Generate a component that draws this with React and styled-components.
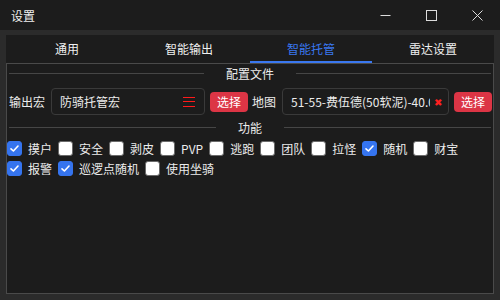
import React, { useState } from 'react';
import styled, { createGlobalStyle } from 'styled-components';

const GlobalStyle = createGlobalStyle`
  html, body {
    margin: 0;
    padding: 0;
    background: #2b2b2b;
  }
  * {
    box-sizing: border-box;
  }
`;

const Window = styled.div`
  width: 500px;
  height: 300px;
  display: flex;
  flex-direction: column;
  background: #2b2b2b;
  color: #ececec;
  font-family: "Noto Sans CJK SC", "Noto Sans", sans-serif;
  font-size: 12px;
  overflow: hidden;
`;

const TitleBar = styled.div`
  height: 30px;
  flex-shrink: 0;
  display: flex;
  align-items: center;
  background: #1c1c1c;
  padding-left: 11px;
`;

const Title = styled.div`
  flex: 1;
  font-size: 12px;
  color: #f0f0f0;
`;

const WinButton = styled.div`
  width: 46px;
  height: 30px;
  display: flex;
  align-items: center;
  justify-content: center;
`;

const Frame = styled.div`
  flex: 1;
  display: flex;
  flex-direction: column;
  padding: 5px 6px 6px;
`;

const TabBar = styled.div`
  height: 28px;
  display: grid;
  grid-template-columns: repeat(4, 1fr);
  background: #1c1c1c;
`;

const Tab = styled.div`
  display: flex;
  align-items: center;
  justify-content: center;
  padding-top: 1px;
  color: ${p => (p.$active ? '#3a78f0' : '#f0f0f0')};
  border-bottom: 2px solid ${p => (p.$active ? '#3a78f0' : 'transparent')};
`;

const Panel = styled.div`
  flex: 1;
  background: #1c1c1c;
  border: 1px solid #4a4a4a;
  display: flex;
  flex-direction: column;
`;

const GroupHeader = styled.div`
  height: 18px;
  margin: ${p => p.$top || 0}px 2px 0;
  display: flex;
  align-items: center;
  gap: 22px;

  &::before, &::after {
    content: '';
    flex: 1;
    height: 1px;
    background: #464646;
  }
`;

const FileRow = styled.div`
  margin: 6px 2px 0;
  height: 27px;
  display: flex;
  align-items: center;
`;

const Label = styled.span`
  margin-right: 6px;
  white-space: nowrap;
`;

const Field = styled.div`
  position: relative;
  flex-shrink: 0;
  width: ${p => p.$width}px;
  height: 27px;
  border: 1px solid #3a3a3a;
  border-radius: 4px;
  display: flex;
  align-items: center;
  padding: 0 ${p => p.$padRight || 8}px 0 8px;
  overflow: hidden;
`;

const FieldText = styled.span`
  white-space: nowrap;
  overflow: hidden;
  flex: 1;
`;

const MenuIcon = styled.span`
  width: 12px;
  height: 10px;
  display: flex;
  flex-direction: column;
  justify-content: space-between;
  margin-right: 1px;

  i {
    display: block;
    height: 1px;
    background: #ff1a1a;
  }
`;

const ClearMark = styled.span`
  position: absolute;
  right: 6px;
  top: 50%;
  transform: translateY(-50%);
  color: #ff2020;
  font-size: 10px;
  line-height: 1;
`;

const RedButton = styled.button`
  flex-shrink: 0;
  height: 20px;
  width: 38px;
  margin: 0 4px 0 5px;
  padding: 0;
  border: none;
  border-radius: 4px;
  background: #dc3545;
  color: #fff;
  font-family: inherit;
  font-size: 12px;
  line-height: 20px;
`;

const CheckRow = styled.div`
  display: flex;
  align-items: center;
  height: 15px;
  margin-top: 5px;
`;

const CheckItem = styled.label`
  display: flex;
  align-items: center;
  margin-right: 6px;
  white-space: nowrap;
`;

const Box = styled.span`
  width: 15px;
  height: 15px;
  border-radius: 3px;
  margin-right: 6px;
  display: flex;
  align-items: center;
  justify-content: center;
  background: ${p => (p.$checked ? '#3574ef' : '#ffffff')};
  border: 1px solid ${p => (p.$checked ? '#3574ef' : '#6a6a6a')};
`;

const Check = () => (
  <svg width="11" height="11" viewBox="0 0 11 11">
    <path d="M2 5.8 L4.4 8 L9 3" stroke="#fff" strokeWidth="1.6" fill="none" strokeLinecap="round" strokeLinejoin="round" />
  </svg>
);

const CheckBox = ({ label, checked }) => (
  <CheckItem>
    <Box $checked={checked}>{checked && <Check />}</Box>
    {label}
  </CheckItem>
);

const rowOne = [
  ['摸户', true], ['安全', false], ['剥皮', false], ['PVP', false], ['逃跑', false],
  ['团队', false], ['拉怪', false], ['随机', true], ['财宝', false],
];

const rowTwo = [['报警', true], ['巡逻点随机', true], ['使用坐骑', false]];

const tabs = ['通用', '智能输出', '智能托管', '雷达设置'];

const App = () => {
  const [active] = useState(2);

  return (
    <Window>
      <GlobalStyle />
      <TitleBar>
        <Title>设置</Title>
        <WinButton>
          <svg width="11" height="11" viewBox="0 0 11 11">
            <path d="M0.5 5.5 H10.5" stroke="#dcdcdc" strokeWidth="1" />
          </svg>
        </WinButton>
        <WinButton>
          <svg width="11" height="11" viewBox="0 0 11 11">
            <rect x="0.5" y="0.5" width="10" height="10" stroke="#dcdcdc" strokeWidth="1" fill="none" />
          </svg>
        </WinButton>
        <WinButton>
          <svg width="11" height="11" viewBox="0 0 11 11">
            <path d="M0.5 0.5 L10.5 10.5 M10.5 0.5 L0.5 10.5" stroke="#dcdcdc" strokeWidth="1" />
          </svg>
        </WinButton>
      </TitleBar>

      <Frame>
        <TabBar>
          {tabs.map((t, i) => (
            <Tab key={t} $active={i === active}>{t}</Tab>
          ))}
        </TabBar>
        <Panel>
          <GroupHeader>配置文件</GroupHeader>
          <FileRow>
            <Label>输出宏</Label>
            <Field $width={154}>
              <FieldText>防骑托管宏</FieldText>
              <MenuIcon><i /><i /><i /></MenuIcon>
            </Field>
            <RedButton>选择</RedButton>
            <Label>地图</Label>
            <Field $width={167} $padRight={18}>
              <FieldText>51-55-费伍德(50软泥)-40.0</FieldText>
              <ClearMark>✖</ClearMark>
            </Field>
            <RedButton>选择</RedButton>
          </FileRow>
          <GroupHeader $top={3}>功能</GroupHeader>
          <CheckRow>
            {rowOne.map(([l, c]) => <CheckBox key={l} label={l} checked={c} />)}
          </CheckRow>
          <CheckRow>
            {rowTwo.map(([l, c]) => <CheckBox key={l} label={l} checked={c} />)}
          </CheckRow>
        </Panel>
      </Frame>
    </Window>
  );
};

export default App;
